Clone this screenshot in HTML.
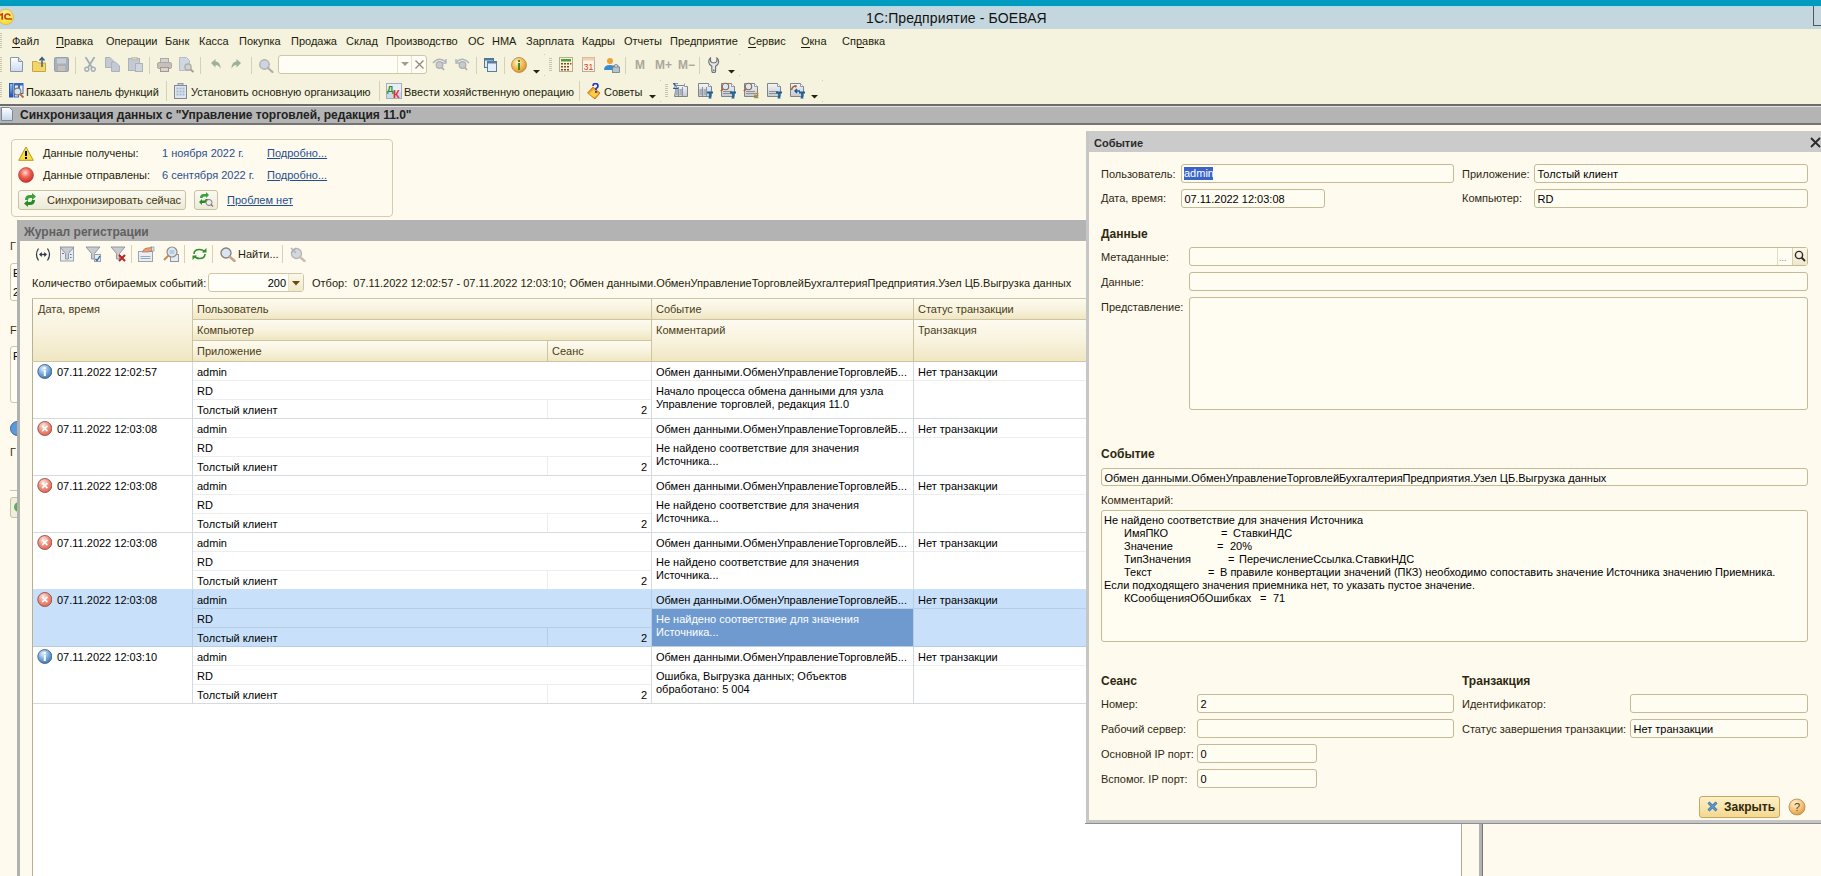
<!DOCTYPE html>
<html><head><meta charset="utf-8"><title>1C</title>
<style>
html,body{margin:0;padding:0;width:1821px;height:876px;overflow:hidden;background:#fffaee;}
.t{position:absolute;white-space:pre;font-family:'Liberation Sans', sans-serif;}
.r{position:absolute;}
</style></head><body>
<div class="r" style="left:0px;top:0px;width:1821px;height:6px;background:#029cc1"></div>
<div class="r" style="left:0px;top:6px;width:1821px;height:1px;background:#a9dcea"></div>
<div class="r" style="left:0px;top:7px;width:1821px;height:22px;background:#c5d7de"></div>
<div class="r" style="left:1813px;top:6px;width:8px;height:20px;border:1px solid #4b5a60;border-right:none;border-top:none;box-sizing:border-box"></div>
<svg class="r" style="left:0px;top:8px" width="15" height="18" viewBox="0 0 15 18"><defs><radialGradient id="lg" cx="0.45" cy="0.3" r="0.7"><stop offset="0" stop-color="#fff6a8"/><stop offset="1" stop-color="#f8d820"/></radialGradient></defs><circle cx="5.8" cy="9" r="7.7" fill="url(#lg)" stroke="#d0b860" stroke-width="0.8"/><path d="M0 7 L2.2 6 V11.7" stroke="#c8440c" stroke-width="1.7" fill="none"/><path d="M10.2 7.6 Q9.4 6 7.4 6 Q4.9 6 4.9 8.8 Q4.9 11 7.4 11 H12" stroke="#c8440c" stroke-width="1.7" fill="none"/></svg>
<div class="t" style="left:866px;top:10px;font-size:14px;line-height:16px;color:#111;font-weight:normal;letter-spacing:0.12px">1С:Предприятие - БОЕВАЯ</div>
<div class="r" style="left:0px;top:29px;width:1821px;height:75px;background:#f5f2de"></div>
<div class="r" style="left:0px;top:33px;width:2px;height:1px;background:#c9c4ad"></div>
<div class="r" style="left:0px;top:35px;width:2px;height:1px;background:#c9c4ad"></div>
<div class="r" style="left:0px;top:37px;width:2px;height:1px;background:#c9c4ad"></div>
<div class="r" style="left:0px;top:39px;width:2px;height:1px;background:#c9c4ad"></div>
<div class="r" style="left:0px;top:41px;width:2px;height:1px;background:#c9c4ad"></div>
<div class="r" style="left:0px;top:43px;width:2px;height:1px;background:#c9c4ad"></div>
<div class="r" style="left:0px;top:45px;width:2px;height:1px;background:#c9c4ad"></div>
<div class="r" style="left:0px;top:47px;width:2px;height:1px;background:#c9c4ad"></div>
<div class="r" style="left:0px;top:57px;width:2px;height:1px;background:#c9c4ad"></div>
<div class="r" style="left:0px;top:59px;width:2px;height:1px;background:#c9c4ad"></div>
<div class="r" style="left:0px;top:61px;width:2px;height:1px;background:#c9c4ad"></div>
<div class="r" style="left:0px;top:63px;width:2px;height:1px;background:#c9c4ad"></div>
<div class="r" style="left:0px;top:65px;width:2px;height:1px;background:#c9c4ad"></div>
<div class="r" style="left:0px;top:67px;width:2px;height:1px;background:#c9c4ad"></div>
<div class="r" style="left:0px;top:69px;width:2px;height:1px;background:#c9c4ad"></div>
<div class="r" style="left:0px;top:71px;width:2px;height:1px;background:#c9c4ad"></div>
<div class="r" style="left:0px;top:82px;width:2px;height:1px;background:#c9c4ad"></div>
<div class="r" style="left:0px;top:84px;width:2px;height:1px;background:#c9c4ad"></div>
<div class="r" style="left:0px;top:86px;width:2px;height:1px;background:#c9c4ad"></div>
<div class="r" style="left:0px;top:88px;width:2px;height:1px;background:#c9c4ad"></div>
<div class="r" style="left:0px;top:90px;width:2px;height:1px;background:#c9c4ad"></div>
<div class="r" style="left:0px;top:92px;width:2px;height:1px;background:#c9c4ad"></div>
<div class="r" style="left:0px;top:94px;width:2px;height:1px;background:#c9c4ad"></div>
<div class="r" style="left:0px;top:96px;width:2px;height:1px;background:#c9c4ad"></div>
<div class="t" style="left:12px;top:35px;font-size:11px;line-height:13px;color:#221d0a;font-weight:normal;">Файл</div>
<div class="t" style="left:56px;top:35px;font-size:11px;line-height:13px;color:#221d0a;font-weight:normal;">Правка</div>
<div class="t" style="left:106px;top:35px;font-size:11px;line-height:13px;color:#221d0a;font-weight:normal;">Операции</div>
<div class="t" style="left:165px;top:35px;font-size:11px;line-height:13px;color:#221d0a;font-weight:normal;">Банк</div>
<div class="t" style="left:199px;top:35px;font-size:11px;line-height:13px;color:#221d0a;font-weight:normal;">Касса</div>
<div class="t" style="left:239px;top:35px;font-size:11px;line-height:13px;color:#221d0a;font-weight:normal;">Покупка</div>
<div class="t" style="left:291px;top:35px;font-size:11px;line-height:13px;color:#221d0a;font-weight:normal;">Продажа</div>
<div class="t" style="left:346px;top:35px;font-size:11px;line-height:13px;color:#221d0a;font-weight:normal;">Склад</div>
<div class="t" style="left:386px;top:35px;font-size:11px;line-height:13px;color:#221d0a;font-weight:normal;">Производство</div>
<div class="t" style="left:468px;top:35px;font-size:11px;line-height:13px;color:#221d0a;font-weight:normal;">ОС</div>
<div class="t" style="left:492px;top:35px;font-size:11px;line-height:13px;color:#221d0a;font-weight:normal;">НМА</div>
<div class="t" style="left:526px;top:35px;font-size:11px;line-height:13px;color:#221d0a;font-weight:normal;">Зарплата</div>
<div class="t" style="left:582px;top:35px;font-size:11px;line-height:13px;color:#221d0a;font-weight:normal;">Кадры</div>
<div class="t" style="left:624px;top:35px;font-size:11px;line-height:13px;color:#221d0a;font-weight:normal;">Отчеты</div>
<div class="t" style="left:670px;top:35px;font-size:11px;line-height:13px;color:#221d0a;font-weight:normal;">Предприятие</div>
<div class="t" style="left:748px;top:35px;font-size:11px;line-height:13px;color:#221d0a;font-weight:normal;">Сервис</div>
<div class="t" style="left:801px;top:35px;font-size:11px;line-height:13px;color:#221d0a;font-weight:normal;">Окна</div>
<div class="t" style="left:842px;top:35px;font-size:11px;line-height:13px;color:#221d0a;font-weight:normal;">Справка</div>
<div class="r" style="left:12px;top:47px;width:8px;height:1px;background:#221d0a"></div>
<div class="r" style="left:56px;top:47px;width:8px;height:1px;background:#221d0a"></div>
<div class="r" style="left:748px;top:47px;width:8px;height:1px;background:#221d0a"></div>
<div class="r" style="left:801px;top:47px;width:9px;height:1px;background:#221d0a"></div>
<div class="r" style="left:857px;top:47px;width:7px;height:1px;background:#221d0a"></div>
<svg class="r" style="left:10px;top:57px" width="13" height="15" viewBox="0 0 13 15"><defs><linearGradient id="dg1057" x1="0" y1="0" x2="0" y2="1"><stop offset="0" stop-color="#ffffff"/><stop offset="1" stop-color="#c9daf0"/></linearGradient></defs><path d="M0.5 0.5 H8.5 L12.5 4.5 V14.5 H0.5 Z" fill="url(#dg1057)" stroke="#8a96a4"/><path d="M8.5 0.5 V4.5 H12.5" fill="#d6dde6" stroke="#8a96a4"/></svg>
<svg class="r" style="left:32px;top:56px" width="15" height="16" viewBox="0 0 15 16"><path d="M0.5 5.5 H5 L6.5 7 H13.5 V15.5 H0.5 Z" fill="#f3d66a" stroke="#c9a447"/><path d="M10 11 V2 M7.5 4.5 L10 1.5 L12.5 4.5" stroke="#3b5a70" stroke-width="1.4" fill="none"/></svg>
<svg class="r" style="left:54px;top:57px" width="15" height="15" viewBox="0 0 15 15"><rect x="0.5" y="0.5" width="14" height="14" rx="1" fill="#a8b0ba" stroke="#97a0aa"/><rect x="3" y="1.5" width="9" height="5" fill="#c8ced6"/><rect x="4" y="9" width="7" height="5" fill="#c8c0b8"/></svg>
<div class="r" style="left:75px;top:57px;width:1px;height:17px;background:#d5d0b8"></div>
<svg class="r" style="left:84px;top:57px" width="12" height="15" viewBox="0 0 12 15"><path d="M1.5 0 L8 10.5 M10.5 0 L4 10.5" stroke="#a4adb8" stroke-width="1.8"/><circle cx="2.8" cy="12.3" r="2" fill="none" stroke="#a4adb8" stroke-width="1.5"/><circle cx="9.2" cy="12.3" r="2" fill="none" stroke="#a4adb8" stroke-width="1.5"/></svg>
<svg class="r" style="left:105px;top:57px" width="15" height="15" viewBox="0 0 15 15"><path d="M0.5 0.5 H5 L8.5 4 V10.5 H0.5 Z" fill="#c3cad3" stroke="#aab2bc"/><path d="M6.5 5 H10.5 L14.5 9 V14.5 H6.5 Z" fill="#c3cad3" stroke="#aab2bc"/></svg>
<svg class="r" style="left:128px;top:57px" width="15" height="15" viewBox="0 0 15 15"><rect x="0.5" y="1.5" width="11" height="12" fill="#c3cad3" stroke="#aab2bc"/><rect x="4" y="0" width="5" height="3" fill="#d8d2b8" stroke="#b8b29a" stroke-width="0.6"/><rect x="7.5" y="6.5" width="7" height="8" fill="#cfd5dc" stroke="#aab2bc"/></svg>
<div class="r" style="left:149px;top:57px;width:1px;height:17px;background:#d5d0b8"></div>
<svg class="r" style="left:157px;top:58px" width="15" height="14" viewBox="0 0 15 14"><rect x="3.5" y="0.5" width="8" height="5" fill="#ccd4dc" stroke="#b0a8a0"/><rect x="0.5" y="4.5" width="14" height="6" rx="1.5" fill="#c8bfb8" stroke="#b0a8a0"/><rect x="3.5" y="9.5" width="8" height="4" fill="#d8d4d0" stroke="#a09890"/></svg>
<svg class="r" style="left:179px;top:57px" width="16" height="16" viewBox="0 0 16 16"><path d="M0.5 0.5 H7.5 L10.5 3.5 V13.5 H0.5 Z" fill="#cdd8e2" stroke="#b4bec8"/><circle cx="9" cy="10" r="3.2" fill="#c8d4dc" stroke="#b0a8a0" stroke-width="1.2"/><path d="M11.5 12.5 L14.5 15" stroke="#b09888" stroke-width="1.8"/></svg>
<div class="r" style="left:200px;top:57px;width:1px;height:17px;background:#d5d0b8"></div>
<svg class="r" style="left:211px;top:59px" width="10" height="11" viewBox="0 0 10 11"><path d="M0 4 L4.5 0 V2.5 Q9.5 2.5 9.5 10 Q8 6 4.5 6 V8.5 Z" fill="#9eb09c"/></svg>
<svg class="r" style="left:231px;top:59px" width="11" height="11" viewBox="0 0 11 11"><path d="M10 4 L5.5 0 V2.5 Q0.5 2.5 0.5 10 Q2 6 5.5 6 V8.5 Z" fill="#9eb09c"/></svg>
<div class="r" style="left:251px;top:57px;width:1px;height:17px;background:#d5d0b8"></div>
<svg class="r" style="left:259px;top:59px" width="15" height="14" viewBox="0 0 15 14"><circle cx="5.5" cy="5.5" r="4.7" fill="#cad6e2" stroke="#b6b0a8" stroke-width="1.4"/><path d="M9 9 L13.5 13" stroke="#b8a8a0" stroke-width="2.2" stroke-linecap="round"/></svg>
<div class="r" style="left:278px;top:55px;width:149px;height:19px;background:#fffdf5;border:1px solid #cfc6a4;border-radius:3px;box-sizing:border-box"></div>
<div class="r" style="left:397px;top:56px;width:1px;height:17px;background:#e6e0c8"></div>
<svg class="r" style="left:401px;top:62px" width="8" height="5" viewBox="0 0 8 5"><path d="M0 0 H8 L4 4 Z" fill="#a49c84"/></svg>
<div class="r" style="left:411px;top:56px;width:1px;height:17px;background:#e6e0c8"></div>
<svg class="r" style="left:415px;top:60px" width="9" height="9" viewBox="0 0 9 9"><path d="M0.5 0.5 L8.5 8.5 M8.5 0.5 L0.5 8.5" stroke="#8f8a7a" stroke-width="1.3"/></svg>
<svg class="r" style="left:432px;top:58px" width="15" height="13" viewBox="0 0 15 13"><path d="M1 5 Q7 -2 14 4" stroke="#a8b6c0" stroke-width="1.6" fill="none"/><path d="M14 1 V5 H10.5" stroke="#a8b6c0" stroke-width="1.4" fill="none"/><circle cx="7.5" cy="7" r="3.3" fill="#c3ccd6" stroke="#b6aca4" stroke-width="1.2"/><path d="M9.8 9.5 L12 12" stroke="#b6aca4" stroke-width="1.8"/></svg>
<svg class="r" style="left:455px;top:58px" width="15" height="13" viewBox="0 0 15 13"><path d="M1 4 Q8 -2 14 5" stroke="#a8b6c0" stroke-width="1.6" fill="none"/><path d="M1 1 V5 H4.5" stroke="#a8b6c0" stroke-width="1.4" fill="none"/><circle cx="7.5" cy="7" r="3.3" fill="#c3ccd6" stroke="#b6aca4" stroke-width="1.2"/><path d="M9.8 9.5 L12 12" stroke="#b6aca4" stroke-width="1.8"/></svg>
<div class="r" style="left:476px;top:57px;width:1px;height:17px;background:#d5d0b8"></div>
<svg class="r" style="left:484px;top:58px" width="14" height="15" viewBox="0 0 14 15"><rect x="0.5" y="0.5" width="9" height="9" fill="#dce8f4" stroke="#4e7898"/><rect x="0.5" y="0.5" width="9" height="2" fill="#4e7898"/><rect x="3.5" y="3.5" width="9" height="10" fill="#e4eef8" stroke="#5a7e9c"/><rect x="3.5" y="3.5" width="9" height="2" fill="#5a7e9c"/></svg>
<div class="r" style="left:504px;top:57px;width:1px;height:17px;background:#d5d0b8"></div>
<svg class="r" style="left:511px;top:57px" width="16" height="16" viewBox="0 0 16 16"><defs><radialGradient id="ig" cx="0.4" cy="0.35" r="0.7"><stop offset="0" stop-color="#fff2c8"/><stop offset="0.6" stop-color="#f0b450"/><stop offset="1" stop-color="#d89030"/></radialGradient></defs><circle cx="8" cy="8" r="7.5" fill="url(#ig)" stroke="#b88838" stroke-width="0.8"/><rect x="7" y="6" width="2" height="7" fill="#4a8a1a"/><rect x="7" y="3" width="2" height="2" fill="#4a8a1a"/></svg>
<svg class="r" style="left:533px;top:70px" width="7" height="4" viewBox="0 0 7 4"><path d="M0 0 H7 L3.5 3.5 Z" fill="#2a2208"/></svg>
<div class="r" style="left:544px;top:54px;width:1px;height:1px;background:#d0cab0"></div>
<div class="r" style="left:544px;top:75px;width:1px;height:1px;background:#d0cab0"></div>
<div class="r" style="left:549px;top:58px;width:3px;height:1px;background:#c9c4ad"></div>
<div class="r" style="left:549px;top:60px;width:3px;height:1px;background:#c9c4ad"></div>
<div class="r" style="left:549px;top:62px;width:3px;height:1px;background:#c9c4ad"></div>
<div class="r" style="left:549px;top:64px;width:3px;height:1px;background:#c9c4ad"></div>
<div class="r" style="left:549px;top:66px;width:3px;height:1px;background:#c9c4ad"></div>
<div class="r" style="left:549px;top:68px;width:3px;height:1px;background:#c9c4ad"></div>
<div class="r" style="left:549px;top:70px;width:3px;height:1px;background:#c9c4ad"></div>
<svg class="r" style="left:559px;top:57px" width="14" height="15" viewBox="0 0 14 15"><rect x="0.5" y="0.5" width="13" height="14" fill="#fbf3dc" stroke="#b8ae8c"/><rect x="2" y="2" width="10" height="2.5" fill="#4aa03a"/><g fill="#7a4a2a"><rect x="2" y="6" width="2" height="1.5"/><rect x="5" y="6" width="2" height="1.5"/><rect x="8" y="6" width="2" height="1.5"/><rect x="2" y="9" width="2" height="1.5"/><rect x="5" y="9" width="2" height="1.5"/><rect x="8" y="9" width="2" height="1.5"/><rect x="2" y="12" width="2" height="1.5"/><rect x="5" y="12" width="2" height="1.5"/><rect x="8" y="12" width="2" height="1.5"/></g><rect x="11" y="6" width="1.5" height="1.5" fill="#d03020"/></svg>
<svg class="r" style="left:582px;top:57px" width="13" height="15" viewBox="0 0 13 15"><rect x="0.5" y="0.5" width="12" height="14" fill="#fbf3e4" stroke="#b8ae9a"/><rect x="0.5" y="0.5" width="12" height="3" fill="#f0d0b0"/><text x="6.5" y="12.5" font-family="Liberation Sans" font-size="8.5" text-anchor="middle" fill="#d84020">31</text></svg>
<svg class="r" style="left:604px;top:57px" width="16" height="16" viewBox="0 0 16 16"><circle cx="6" cy="4" r="3" fill="#f0a030"/><path d="M0 13 Q0 8 6 8 Q10 8 11 10 V13 Z" fill="#3a8ad0"/><rect x="8.5" y="10" width="7" height="5.5" fill="#b8c4d0" stroke="#6a7a8a" stroke-width="0.8"/><path d="M10 10 V8.5 Q12 6.5 14 8.5 V10" stroke="#6a7a8a" fill="none"/></svg>
<div class="r" style="left:625px;top:57px;width:1px;height:17px;background:#d5d0b8"></div>
<div class="t" style="left:635px;top:58px;font-size:12px;line-height:14px;color:#aca79b;font-weight:bold;">M</div>
<div class="t" style="left:655px;top:58px;font-size:12px;line-height:14px;color:#aca79b;font-weight:bold;">M+</div>
<div class="t" style="left:678px;top:58px;font-size:12px;line-height:14px;color:#aca79b;font-weight:bold;">M−</div>
<div class="r" style="left:699px;top:57px;width:1px;height:17px;background:#d5d0b8"></div>
<svg class="r" style="left:708px;top:57px" width="12" height="16" viewBox="0 0 12 16"><path d="M2.5 0.8 A5 5 0 0 0 3.8 9.2 V13.8 A1.9 1.9 0 0 0 7.6 13.8 V9.2 A5 5 0 0 0 8.9 0.8 V4.2 L7.2 5.8 H4.2 L2.5 4.2 Z" fill="#e2e6ea" stroke="#6a7078" stroke-width="1.1"/><circle cx="5.7" cy="13.3" r="0.9" fill="#6a7078"/></svg>
<svg class="r" style="left:728px;top:70px" width="7" height="4" viewBox="0 0 7 4"><path d="M0 0 H7 L3.5 3.5 Z" fill="#2a2208"/></svg>
<div class="r" style="left:739px;top:54px;width:1px;height:1px;background:#d0cab0"></div>
<div class="r" style="left:739px;top:75px;width:1px;height:1px;background:#d0cab0"></div>
<svg class="r" style="left:9px;top:83px" width="16" height="16" viewBox="0 0 16 16"><defs><linearGradient id="pc" x1="0" y1="0" x2="0" y2="1"><stop offset="0" stop-color="#9cc4f4"/><stop offset="0.6" stop-color="#4a84d8"/><stop offset="1" stop-color="#1a48a8"/></linearGradient></defs><rect x="0.5" y="0.5" width="3.5" height="13.5" fill="url(#pc)" stroke="#2a5ab8"/><rect x="5.5" y="0.5" width="4" height="13.5" fill="#e8f0fa" stroke="#3a6ac0"/><rect x="5.5" y="0.5" width="4" height="2" fill="#3a6ac0"/><rect x="10.5" y="0.5" width="3.5" height="10" fill="#e8f0fa" stroke="#3a6ac0"/><rect x="10.5" y="0.5" width="3.5" height="2" fill="#3a6ac0"/><circle cx="8.5" cy="8.5" r="3.4" fill="#d4e6f8" stroke="#8a7a60" stroke-width="1.1"/><path d="M11 11 L14.5 14.5" stroke="#b87038" stroke-width="2"/></svg>
<div class="t" style="left:26px;top:86px;font-size:11px;line-height:13px;color:#221d0a;font-weight:normal;">Показать панель функций</div>
<div class="r" style="left:166px;top:81px;width:1px;height:20px;background:#d5d0b8"></div>
<svg class="r" style="left:174px;top:83px" width="13" height="16" viewBox="0 0 13 16"><rect x="4" y="0.5" width="5" height="2.5" fill="#c8d0dc" stroke="#7a8898" stroke-width="0.8"/><rect x="0.5" y="2.5" width="12" height="13" fill="#dfe6f0" stroke="#7a8898"/><g fill="#a8b8cc"><rect x="2.5" y="4.5" width="2" height="2"/><rect x="5.5" y="4.5" width="2" height="2"/><rect x="8.5" y="4.5" width="2" height="2"/><rect x="2.5" y="7.5" width="2" height="2"/><rect x="5.5" y="7.5" width="2" height="2"/><rect x="8.5" y="7.5" width="2" height="2"/><rect x="2.5" y="10.5" width="2" height="2"/><rect x="5.5" y="10.5" width="2" height="2"/><rect x="8.5" y="10.5" width="2" height="2"/></g></svg>
<div class="t" style="left:191px;top:86px;font-size:11px;line-height:13px;color:#221d0a;font-weight:normal;">Установить основную организацию</div>
<div class="r" style="left:379px;top:81px;width:1px;height:20px;background:#d5d0b8"></div>
<svg class="r" style="left:386px;top:83px" width="17" height="17" viewBox="0 0 17 17"><rect x="0.5" y="0.5" width="15" height="15" fill="#e8eef4" stroke="#a4b0bc"/><rect x="1" y="9" width="14" height="6" fill="#c8daea"/><text x="1" y="9" font-family="Liberation Sans" font-weight="bold" font-size="9" fill="#2a8a2a">Д</text><text x="7" y="15" font-family="Liberation Sans" font-weight="bold" font-size="11" fill="#e03030">К</text></svg>
<div class="t" style="left:404px;top:86px;font-size:11px;line-height:13px;color:#221d0a;font-weight:normal;">Ввести хозяйственную операцию</div>
<div class="r" style="left:579px;top:81px;width:1px;height:20px;background:#d5d0b8"></div>
<svg class="r" style="left:587px;top:83px" width="14" height="17" viewBox="0 0 14 17"><path d="M0.5 10 L6 4 L13 10 L8 16 Z" fill="#f0a020" stroke="#c06818" stroke-width="0.8"/><path d="M2 11 L6.5 6.5 L11 11 L7.5 14.5 Z" fill="#f8d040"/><path d="M6 3 Q6 0.5 8.5 0.5 Q11 0.5 11 3 Q11 5 9 5.5 V7" stroke="#2030c0" stroke-width="1.6" fill="none"/><rect x="8" y="8" width="1.8" height="1.8" fill="#2030c0"/></svg>
<div class="t" style="left:604px;top:86px;font-size:11px;line-height:13px;color:#221d0a;font-weight:normal;">Советы</div>
<svg class="r" style="left:649px;top:95px" width="7" height="4" viewBox="0 0 7 4"><path d="M0 0 H7 L3.5 3.5 Z" fill="#2a2208"/></svg>
<div class="r" style="left:660px;top:80px;width:1px;height:1px;background:#d0cab0"></div>
<div class="r" style="left:660px;top:101px;width:1px;height:1px;background:#d0cab0"></div>
<div class="r" style="left:665px;top:84px;width:3px;height:1px;background:#c9c4ad"></div>
<div class="r" style="left:665px;top:86px;width:3px;height:1px;background:#c9c4ad"></div>
<div class="r" style="left:665px;top:88px;width:3px;height:1px;background:#c9c4ad"></div>
<div class="r" style="left:665px;top:90px;width:3px;height:1px;background:#c9c4ad"></div>
<div class="r" style="left:665px;top:92px;width:3px;height:1px;background:#c9c4ad"></div>
<div class="r" style="left:665px;top:94px;width:3px;height:1px;background:#c9c4ad"></div>
<div class="r" style="left:665px;top:96px;width:3px;height:1px;background:#c9c4ad"></div>
<svg class="r" style="left:673px;top:82px" width="17" height="17" viewBox="0 0 17 17"><defs><linearGradient id="pg673" x1="0" y1="0" x2="0" y2="1"><stop offset="0" stop-color="#f4f6f8"/><stop offset="1" stop-color="#c4c8cc"/></linearGradient></defs><path d="M3.5 3.5 H11.5 L14.5 4.5 V14.5 H1.5 Z" fill="url(#pg673)" stroke="#7c848c"/><path d="M11.5 1.5 V4.5 H14.5" fill="#fff" stroke="#7c848c" stroke-width="0.8"/><g stroke="#8a96a8"><path d="M5.5 5 V14 M9.5 5 V14"/></g><g fill="#a8b0b8"><rect x="2.5" y="7" width="2.5" height="6"/><rect x="6.5" y="7" width="2.5" height="6"/></g><text x="-0.5" y="7" font-family="Liberation Serif" font-weight="bold" font-size="9" fill="#1a5a98">Σ</text></svg>
<svg class="r" style="left:697px;top:82px" width="17" height="17" viewBox="0 0 17 17"><defs><linearGradient id="pg697" x1="0" y1="0" x2="0" y2="1"><stop offset="0" stop-color="#f4f6f8"/><stop offset="1" stop-color="#c4c8cc"/></linearGradient></defs><path d="M1.5 1.5 H11.5 L14.5 4.5 V14.5 H1.5 Z" fill="url(#pg697)" stroke="#7c848c"/><path d="M11.5 1.5 V4.5 H14.5" fill="#fff" stroke="#7c848c" stroke-width="0.8"/><g stroke="#8a96a8"><path d="M5.5 5 V14 M9.5 5 V14"/></g><g fill="#a8b0b8"><rect x="2.5" y="7" width="2.5" height="6"/><rect x="6.5" y="7" width="2.5" height="6"/></g><path d="M10 10.5 H16 M13 10.5 V16" stroke="#1a6098" stroke-width="1.8"/><path d="M11.5 16 H14.5" stroke="#1a6098" stroke-width="1"/></svg>
<svg class="r" style="left:720px;top:82px" width="17" height="17" viewBox="0 0 17 17"><defs><linearGradient id="pg720" x1="0" y1="0" x2="0" y2="1"><stop offset="0" stop-color="#f4f6f8"/><stop offset="1" stop-color="#c4c8cc"/></linearGradient></defs><path d="M1.5 1.5 H11.5 L14.5 4.5 V14.5 H1.5 Z" fill="url(#pg720)" stroke="#7c848c"/><path d="M11.5 1.5 V4.5 H14.5" fill="#fff" stroke="#7c848c" stroke-width="0.8"/><g stroke="#8a9098" stroke-width="1.2"><path d="M3 9.5 H12 M3 11.5 H12"/></g><path d="M10 10.5 H16 M13 10.5 V16" stroke="#1a6098" stroke-width="1.8"/><path d="M11.5 16 H14.5" stroke="#1a6098" stroke-width="1"/><circle cx="5.5" cy="4.5" r="3.2" fill="#d8e8f8" stroke="#8a6a4a" stroke-width="1.1"/><path d="M3.2 6.8 L0.8 9.2" stroke="#a86030" stroke-width="1.5"/></svg>
<svg class="r" style="left:743px;top:82px" width="17" height="17" viewBox="0 0 17 17"><defs><linearGradient id="pg743" x1="0" y1="0" x2="0" y2="1"><stop offset="0" stop-color="#f4f6f8"/><stop offset="1" stop-color="#c4c8cc"/></linearGradient></defs><path d="M1.5 1.5 H11.5 L14.5 4.5 V14.5 H1.5 Z" fill="url(#pg743)" stroke="#7c848c"/><path d="M11.5 1.5 V4.5 H14.5" fill="#fff" stroke="#7c848c" stroke-width="0.8"/><g stroke="#8a9098" stroke-width="1.2"><path d="M3 9.5 H12 M3 11.5 H12"/></g><circle cx="5.5" cy="4.5" r="3.2" fill="#d8e8f8" stroke="#8a6a4a" stroke-width="1.1"/><path d="M3.2 6.8 L0.8 9.2" stroke="#a86030" stroke-width="1.5"/><g fill="#b09040"><rect x="11" y="11" width="4.5" height="1.2"/><rect x="11" y="13" width="4.5" height="1.2"/><rect x="11" y="15" width="4.5" height="1.2"/></g></svg>
<svg class="r" style="left:766px;top:82px" width="17" height="17" viewBox="0 0 17 17"><defs><linearGradient id="pg766" x1="0" y1="0" x2="0" y2="1"><stop offset="0" stop-color="#f4f6f8"/><stop offset="1" stop-color="#c4c8cc"/></linearGradient></defs><path d="M1.5 1.5 H11.5 L14.5 4.5 V14.5 H1.5 Z" fill="url(#pg766)" stroke="#7c848c"/><path d="M11.5 1.5 V4.5 H14.5" fill="#fff" stroke="#7c848c" stroke-width="0.8"/><g stroke="#8a9098" stroke-width="1.2"><path d="M3 9.5 H12 M3 11.5 H12"/></g><path d="M10 10.5 H16 M13 10.5 V16" stroke="#1a6098" stroke-width="1.8"/><path d="M11.5 16 H14.5" stroke="#1a6098" stroke-width="1"/></svg>
<svg class="r" style="left:789px;top:82px" width="17" height="17" viewBox="0 0 17 17"><defs><linearGradient id="pg789" x1="0" y1="0" x2="0" y2="1"><stop offset="0" stop-color="#f4f6f8"/><stop offset="1" stop-color="#c4c8cc"/></linearGradient></defs><path d="M1.5 1.5 H11.5 L14.5 4.5 V14.5 H1.5 Z" fill="url(#pg789)" stroke="#7c848c"/><path d="M11.5 1.5 V4.5 H14.5" fill="#fff" stroke="#7c848c" stroke-width="0.8"/><path d="M10 10.5 H16 M13 10.5 V16" stroke="#1a6098" stroke-width="1.8"/><path d="M11.5 16 H14.5" stroke="#1a6098" stroke-width="1"/><path d="M2.5 8 Q3.5 3.5 7.5 4" stroke="#b05a20" stroke-width="1.4" fill="none"/><path d="M6 3 L8 4 L6.5 6" fill="#b05a20"/><path d="M11 9 H6 M8 7 L6 9 L8 11" stroke="#1a5a98" stroke-width="1.4" fill="none"/></svg>
<svg class="r" style="left:811px;top:95px" width="7" height="4" viewBox="0 0 7 4"><path d="M0 0 H7 L3.5 3.5 Z" fill="#2a2208"/></svg>
<div class="r" style="left:822px;top:80px;width:1px;height:1px;background:#d0cab0"></div>
<div class="r" style="left:822px;top:101px;width:1px;height:1px;background:#d0cab0"></div>
<div class="r" style="left:0px;top:104px;width:1821px;height:2px;background:#6c6c6c"></div>
<div class="r" style="left:0px;top:106px;width:1821px;height:1px;background:#e4e4e4"></div>
<div class="r" style="left:0px;top:107px;width:1821px;height:16px;background:#b4b4b4"></div>
<div class="r" style="left:0px;top:123px;width:1821px;height:2px;background:#747474"></div>
<svg class="r" style="left:1px;top:107px" width="13" height="15" viewBox="0 0 13 15"><defs><linearGradient id="tdg" x1="0" y1="0" x2="0" y2="1"><stop offset="0" stop-color="#ffffff"/><stop offset="1" stop-color="#c4d6e8"/></linearGradient></defs><path d="M0.5 0.5 H8.5 L11.5 3.5 V13.5 H0.5 Z" fill="url(#tdg)" stroke="#7a8898"/></svg>
<div class="t" style="left:20px;top:108px;font-size:12px;line-height:14px;color:#222;font-weight:bold;">Синхронизация данных с &quot;Управление торговлей, редакция 11.0&quot;</div>
<div class="r" style="left:0px;top:125px;width:1821px;height:751px;background:#fffaee"></div>
<div class="t" style="left:10px;top:240px;font-size:11px;line-height:13px;color:#3a3010;font-weight:normal;width:7px;overflow:hidden">Г</div>
<div class="r" style="left:10px;top:263px;width:12px;height:38px;border:1px solid #cfc6a4;border-radius:3px;box-sizing:border-box;background:#fffdf6"></div>
<div class="t" style="left:13px;top:267px;font-size:11px;line-height:13px;color:#000;font-weight:normal;width:4px;overflow:hidden">Е</div>
<div class="t" style="left:13px;top:286px;font-size:11px;line-height:13px;color:#000;font-weight:normal;width:4px;overflow:hidden">2</div>
<div class="t" style="left:10px;top:324px;font-size:11px;line-height:13px;color:#3a3010;font-weight:normal;width:7px;overflow:hidden">F</div>
<div class="r" style="left:10px;top:346px;width:12px;height:57px;border:1px solid #cfc6a4;border-radius:3px;box-sizing:border-box;background:#fffdf6"></div>
<div class="t" style="left:13px;top:350px;font-size:11px;line-height:13px;color:#000;font-weight:normal;width:4px;overflow:hidden">Р</div>
<svg class="r" style="left:10px;top:421px" width="8" height="15" viewBox="0 0 8 15"><circle cx="7.5" cy="7.5" r="7" fill="#5a9ad8" stroke="#3a6a9a"/></svg>
<div class="t" style="left:10px;top:446px;font-size:11px;line-height:13px;color:#3a3010;font-weight:normal;width:7px;overflow:hidden">Г</div>
<div class="r" style="left:10px;top:490px;width:8px;height:1px;background:#cfc6a4"></div>
<div class="r" style="left:10px;top:497px;width:12px;height:21px;border:1px solid #c8c0a0;border-radius:3px;box-sizing:border-box;background:#f0eee0"></div>
<svg class="r" style="left:13px;top:501px" width="5" height="12" viewBox="0 0 5 12"><circle cx="6" cy="6" r="5" fill="#5ab050"/></svg>
<div class="r" style="left:11px;top:139px;width:382px;height:78px;border:1px solid #d6cdb0;border-radius:4px;box-sizing:border-box"></div>
<svg class="r" style="left:18px;top:146px" width="16" height="15" viewBox="0 0 16 15"><path d="M8 1 L15.3 14.3 H0.7 Z" fill="#f8e040" stroke="#b89820" stroke-width="1" stroke-linejoin="round"/><rect x="7" y="5" width="2" height="5" fill="#000"/><rect x="7" y="11" width="2" height="2" fill="#000"/></svg>
<svg class="r" style="left:18px;top:167px" width="16" height="16" viewBox="0 0 16 16"><defs><radialGradient id="rg" cx="0.45" cy="0.35" r="0.65"><stop offset="0" stop-color="#ffd8d0"/><stop offset="0.5" stop-color="#f06050"/><stop offset="1" stop-color="#c83028"/></radialGradient></defs><circle cx="8" cy="8" r="7.5" fill="url(#rg)" stroke="#a04038" stroke-width="0.6"/></svg>
<div class="t" style="left:43px;top:147px;font-size:11px;line-height:13px;color:#221d0a;font-weight:normal;">Данные получены:</div>
<div class="t" style="left:162px;top:147px;font-size:11px;line-height:13px;color:#1f4f8f;font-weight:normal;">1 ноября 2022 г.</div>
<div class="t" style="left:267px;top:147px;font-size:11px;line-height:13px;color:#1f4f8f;font-weight:normal;text-decoration:underline">Подробно...</div>
<div class="t" style="left:43px;top:169px;font-size:11px;line-height:13px;color:#221d0a;font-weight:normal;">Данные отправлены:</div>
<div class="t" style="left:162px;top:169px;font-size:11px;line-height:13px;color:#1f4f8f;font-weight:normal;">6 сентября 2022 г.</div>
<div class="t" style="left:267px;top:169px;font-size:11px;line-height:13px;color:#1f4f8f;font-weight:normal;text-decoration:underline">Подробно...</div>
<div class="r" style="left:18px;top:190px;width:168px;height:20px;border:1px solid #c9c1a0;border-radius:3px;box-sizing:border-box;background:linear-gradient(#fbfaf2,#ecead8)"></div>
<svg class="r" style="left:23px;top:193px" width="14" height="14" viewBox="0 0 14 14"><path d="M2 7 Q2 2 7 2 H9 V0 L13 3.5 L9 7 V5 H7 Q5 5 5 7 Z" fill="#3aa03a"/><path d="M12 7 Q12 12 7 12 H5 V14 L1 10.5 L5 7 V9 H7 Q9 9 9 7 Z" fill="#2a8a2a"/></svg>
<div class="t" style="left:47px;top:194px;font-size:11px;line-height:13px;color:#43360c;font-weight:normal;">Синхронизировать сейчас</div>
<div class="r" style="left:194px;top:190px;width:24px;height:20px;border:1px solid #c9c1a0;border-radius:3px;box-sizing:border-box;background:linear-gradient(#fbfaf2,#ecead8)"></div>
<svg class="r" style="left:198px;top:192px" width="16" height="16" viewBox="0 0 16 16"><path d="M2 6 Q2 2 6 2 H8 V0 L11 3 L8 6 V4.5 H6 Q4.5 4.5 4.5 6 Z" fill="#3aa03a"/><path d="M10 7 Q10 11 6 11 H4 V13 L1 10 L4 7 V8.5 H6 Q7.5 8.5 7.5 7 Z" fill="#2a8a2a"/><circle cx="11" cy="10.5" r="3" fill="#e8eef6" stroke="#8a7a6a" stroke-width="1"/><path d="M13 12.5 L15 14.5" stroke="#8a7a6a" stroke-width="1.5"/></svg>
<div class="t" style="left:227px;top:194px;font-size:11px;line-height:13px;color:#1f4f8f;font-weight:normal;text-decoration:underline">Проблем нет</div>
<div class="r" style="left:17px;top:220px;width:1466px;height:656px;background:#fffaee"></div>
<div class="r" style="left:17px;top:220px;width:3px;height:656px;background:#b1b1b1"></div>
<div class="r" style="left:1479px;top:220px;width:3px;height:656px;background:#b2b2b2"></div>
<div class="r" style="left:1482px;top:220px;width:1px;height:656px;background:#767676"></div>
<div class="r" style="left:20px;top:220px;width:1459px;height:21px;background:#b3b3b3"></div>
<div class="t" style="left:24px;top:225px;font-size:12px;line-height:14px;color:#606060;font-weight:bold;">Журнал регистрации</div>
<svg class="r" style="left:35px;top:248px" width="16" height="13" viewBox="0 0 16 13"><path d="M3.5 0.5 Q-0.5 6.5 3.5 12.5 M12.5 0.5 Q16.5 6.5 12.5 12.5" stroke="#2a3a4a" stroke-width="1.2" fill="none"/><path d="M5 6.5 H11" stroke="#2a3a4a" stroke-width="1.3"/><path d="M4 6.5 L6.8 4 V9 Z M12 6.5 L9.2 4 V9 Z" fill="#2a3a4a"/></svg>
<svg class="r" style="left:59px;top:246px" width="16" height="16" viewBox="0 0 16 16"><rect x="1.5" y="1.5" width="13" height="13.5" fill="#e4ecf4" stroke="#98a2ac"/><path d="M1 1 H15 L9.5 7.5 V13 H6.5 V7.5 Z" fill="#c8ccd0" stroke="#8a9098" stroke-width="0.9"/><g fill="#d05050"><rect x="3" y="7" width="2" height="1"/></g><g fill="#5070a0"><rect x="11" y="8" width="1.5" height="1"/><rect x="11" y="11" width="1.5" height="1"/></g></svg>
<svg class="r" style="left:85px;top:246px" width="16" height="16" viewBox="0 0 16 16"><path d="M1 1 H15 L9.5 7.5 V13 H6.5 V7.5 Z" fill="#c8ccd0" stroke="#8a9098" stroke-width="0.9"/><rect x="9.5" y="8.5" width="6" height="7" fill="#e4ecf4" stroke="#98a2ac"/><path d="M10.5 13 L12 14.5 L15 10" stroke="#2a62a0" stroke-width="1.3" fill="none"/></svg>
<svg class="r" style="left:110px;top:246px" width="16" height="16" viewBox="0 0 16 16"><path d="M1 1 H15 L9.5 7.5 V13 H6.5 V7.5 Z" fill="#c8ccd0" stroke="#8a9098" stroke-width="0.9"/><path d="M9 9 L15 15 M15 9 L9 15" stroke="#c02020" stroke-width="2"/></svg>
<div class="r" style="left:131px;top:245px;width:1px;height:18px;background:#d5d0b8"></div>
<svg class="r" style="left:138px;top:246px" width="17" height="16" viewBox="0 0 17 16"><rect x="0.5" y="5.5" width="14" height="10" fill="#e8eef4" stroke="#9aa4ae"/><g stroke="#9aa8b8"><path d="M2.5 10.5 H12.5 M2.5 12.5 H12.5"/></g><path d="M4 6 Q7 1 10 2 L14 1 V5 L10 6 Z" fill="#e8a070" stroke="#b07050" stroke-width="0.7"/><rect x="13.5" y="1" width="2.5" height="4" fill="#d8e4f0" stroke="#7a8a9a" stroke-width="0.6"/></svg>
<svg class="r" style="left:163px;top:246px" width="16" height="16" viewBox="0 0 16 16"><rect x="7.5" y="8.5" width="8" height="7" fill="#e4ecf4" stroke="#8a96a4"/><circle cx="9" cy="6" r="5" fill="#dde8f4" stroke="#9a8a7a" stroke-width="1.2"/><path d="M5.5 9.5 L1 14" stroke="#c88858" stroke-width="2"/><g stroke="#8ab0d8"><path d="M6.5 5 H11.5 M6.5 7 H11.5"/></g></svg>
<div class="r" style="left:184px;top:245px;width:1px;height:18px;background:#d5d0b8"></div>
<svg class="r" style="left:192px;top:248px" width="15" height="12" viewBox="0 0 15 12"><path d="M2 6 Q2 1.5 7.5 1.5 Q11 1.5 12.5 4" stroke="#2f8f2f" stroke-width="1.6" fill="none"/><path d="M10 4.5 H14.5 L14.5 0 Z" fill="#2f8f2f"/><path d="M13 6 Q13 10.5 7.5 10.5 Q4 10.5 2.5 8" stroke="#2f8f2f" stroke-width="1.6" fill="none"/><path d="M5 7.5 H0.5 V12 Z" fill="#2f8f2f"/></svg>
<div class="r" style="left:212px;top:245px;width:1px;height:18px;background:#d5d0b8"></div>
<svg class="r" style="left:220px;top:247px" width="16" height="15" viewBox="0 0 16 15"><circle cx="6" cy="6" r="5" fill="#d8e6f4" stroke="#8a7e76" stroke-width="1.3"/><path d="M9.5 9.5 L14.5 14" stroke="#c8a088" stroke-width="2.4" stroke-linecap="round"/></svg>
<div class="t" style="left:238px;top:248px;font-size:11px;line-height:13px;color:#221d0a;font-weight:normal;">Найти...</div>
<div class="r" style="left:282px;top:245px;width:1px;height:18px;background:#d5d0b8"></div>
<svg class="r" style="left:290px;top:247px" width="16" height="15" viewBox="0 0 16 15"><circle cx="6.5" cy="6.5" r="5" fill="#d0d8e0" stroke="#b8b4b0" stroke-width="1.3"/><path d="M10 10 L14.5 14" stroke="#c8bcb4" stroke-width="2.4" stroke-linecap="round"/><path d="M1 1 L6 6 M6 1 L1 6" stroke="#b8b0b0" stroke-width="1.5"/></svg>
<div class="t" style="left:32px;top:277px;font-size:11px;line-height:13px;color:#221d0a;font-weight:normal;">Количество отбираемых событий:</div>
<div class="r" style="left:208px;top:273px;width:96px;height:19px;background:#fffef8;border:1px solid #cfc6a4;border-radius:3px;box-sizing:border-box"></div>
<div class="r" style="left:288px;top:274px;width:1px;height:17px;background:#e8e2cc"></div>
<div class="r" style="left:289px;top:274px;width:14px;height:17px;background:linear-gradient(#fbf8ea,#efe8cc)"></div>
<svg class="r" style="left:292px;top:281px" width="8" height="5" viewBox="0 0 8 5"><path d="M0 0 H8 L4 4.5 Z" fill="#6a4a10"/></svg>
<div class="t" style="left:266px;top:277px;font-size:11px;line-height:13px;color:#000;font-weight:normal;width:20px;text-align:right">200</div>
<div class="t" style="left:312px;top:277px;font-size:11px;line-height:13px;color:#221d0a;font-weight:normal;">Отбор:  07.11.2022 12:02:57 - 07.11.2022 12:03:10; Обмен данными.ОбменУправлениеТорговлейБухгалтерияПредприятия.Узел ЦБ.Выгрузка данных</div>
<div class="r" style="left:32px;top:298px;width:1430px;height:578px;background:#fff"></div>
<div class="r" style="left:32px;top:298px;width:1px;height:578px;background:#b8b094"></div>
<div class="r" style="left:1461px;top:298px;width:1px;height:578px;background:#b4ac92"></div>
<div class="r" style="left:33px;top:299px;width:159px;height:62px;background:linear-gradient(#fdfbf1,#f8f2dc 55%,#efe6c2)"></div>
<div class="r" style="left:193px;top:299px;width:458px;height:20px;background:linear-gradient(#fdfbf1,#f8f2dc 55%,#efe6c2)"></div>
<div class="r" style="left:193px;top:320px;width:458px;height:20px;background:linear-gradient(#fdfbf1,#f8f2dc 55%,#efe6c2)"></div>
<div class="r" style="left:193px;top:341px;width:354px;height:20px;background:linear-gradient(#fdfbf1,#f8f2dc 55%,#efe6c2)"></div>
<div class="r" style="left:548px;top:341px;width:103px;height:20px;background:linear-gradient(#fdfbf1,#f8f2dc 55%,#efe6c2)"></div>
<div class="r" style="left:652px;top:299px;width:261px;height:20px;background:linear-gradient(#fdfbf1,#f8f2dc 55%,#efe6c2)"></div>
<div class="r" style="left:652px;top:320px;width:261px;height:41px;background:linear-gradient(#fdfbf1,#f8f2dc 55%,#efe6c2)"></div>
<div class="r" style="left:914px;top:299px;width:547px;height:20px;background:linear-gradient(#fdfbf1,#f8f2dc 55%,#efe6c2)"></div>
<div class="r" style="left:914px;top:320px;width:547px;height:41px;background:linear-gradient(#fdfbf1,#f8f2dc 55%,#efe6c2)"></div>
<div class="r" style="left:32px;top:298px;width:1430px;height:1px;background:#cfc4a0"></div>
<div class="r" style="left:32px;top:361px;width:1430px;height:1px;background:#cfc4a0"></div>
<div class="r" style="left:192px;top:319px;width:1270px;height:1px;background:#cfc4a0"></div>
<div class="r" style="left:192px;top:340px;width:459px;height:1px;background:#cfc4a0"></div>
<div class="r" style="left:192px;top:299px;width:1px;height:62px;background:#cfc4a0"></div>
<div class="r" style="left:547px;top:341px;width:1px;height:20px;background:#cfc4a0"></div>
<div class="r" style="left:651px;top:299px;width:1px;height:62px;background:#cfc4a0"></div>
<div class="r" style="left:913px;top:299px;width:1px;height:62px;background:#cfc4a0"></div>
<div class="t" style="left:38px;top:303px;font-size:11px;line-height:13px;color:#4a3d16;font-weight:normal;">Дата, время</div>
<div class="t" style="left:197px;top:303px;font-size:11px;line-height:13px;color:#4a3d16;font-weight:normal;">Пользователь</div>
<div class="t" style="left:197px;top:324px;font-size:11px;line-height:13px;color:#4a3d16;font-weight:normal;">Компьютер</div>
<div class="t" style="left:197px;top:345px;font-size:11px;line-height:13px;color:#4a3d16;font-weight:normal;">Приложение</div>
<div class="t" style="left:552px;top:345px;font-size:11px;line-height:13px;color:#4a3d16;font-weight:normal;">Сеанс</div>
<div class="t" style="left:656px;top:303px;font-size:11px;line-height:13px;color:#4a3d16;font-weight:normal;">Событие</div>
<div class="t" style="left:656px;top:324px;font-size:11px;line-height:13px;color:#4a3d16;font-weight:normal;">Комментарий</div>
<div class="t" style="left:918px;top:303px;font-size:11px;line-height:13px;color:#4a3d16;font-weight:normal;">Статус транзакции</div>
<div class="t" style="left:918px;top:324px;font-size:11px;line-height:13px;color:#4a3d16;font-weight:normal;">Транзакция</div>
<div class="r" style="left:192px;top:380px;width:1269px;height:1px;background:#ededed"></div>
<div class="r" style="left:192px;top:399px;width:459px;height:1px;background:#ededed"></div>
<div class="r" style="left:547px;top:400px;width:1px;height:18px;background:#ededed"></div>
<div class="r" style="left:33px;top:418px;width:1428px;height:1px;background:#d5dade"></div>
<div class="r" style="left:192px;top:362px;width:1px;height:56px;background:#d5dade"></div>
<div class="r" style="left:651px;top:362px;width:1px;height:56px;background:#d5dade"></div>
<div class="r" style="left:913px;top:362px;width:1px;height:56px;background:#d5dade"></div>
<svg class="r" style="left:37px;top:364px" width="15" height="15" viewBox="0 0 15 15"><defs><radialGradient id="ii" cx="0.4" cy="0.3" r="0.75"><stop offset="0" stop-color="#e4f2fc"/><stop offset="0.55" stop-color="#72a8dc"/><stop offset="1" stop-color="#3a72b0"/></radialGradient></defs><circle cx="7.8" cy="7.5" r="7" fill="url(#ii)" stroke="#4a6080" stroke-width="0.9"/><rect x="6.8" y="6" width="2" height="6" fill="#fff"/><rect x="6.8" y="3" width="2" height="2" fill="#fff"/></svg>
<div class="t" style="left:57px;top:366px;font-size:11px;line-height:13px;color:#000;font-weight:normal;">07.11.2022 12:02:57</div>
<div class="t" style="left:197px;top:366px;font-size:11px;line-height:13px;color:#000;font-weight:normal;">admin</div>
<div class="t" style="left:197px;top:385px;font-size:11px;line-height:13px;color:#000;font-weight:normal;">RD</div>
<div class="t" style="left:197px;top:404px;font-size:11px;line-height:13px;color:#000;font-weight:normal;">Толстый клиент</div>
<div class="t" style="left:600px;top:404px;font-size:11px;line-height:13px;color:#000;font-weight:normal;width:47px;text-align:right">2</div>
<div class="t" style="left:656px;top:366px;font-size:11px;line-height:13px;color:#000;font-weight:normal;">Обмен данными.ОбменУправлениеТорговлейБ...</div>
<div class="t" style="left:918px;top:366px;font-size:11px;line-height:13px;color:#000;font-weight:normal;">Нет транзакции</div>
<div class="t" style="left:656px;top:385px;font-size:11px;line-height:13px;color:#000;font-weight:normal;">Начало процесса обмена данными для узла</div>
<div class="t" style="left:656px;top:398px;font-size:11px;line-height:13px;color:#000;font-weight:normal;">Управление торговлей, редакция 11.0</div>
<div class="r" style="left:192px;top:437px;width:1269px;height:1px;background:#ededed"></div>
<div class="r" style="left:192px;top:456px;width:459px;height:1px;background:#ededed"></div>
<div class="r" style="left:547px;top:457px;width:1px;height:18px;background:#ededed"></div>
<div class="r" style="left:33px;top:475px;width:1428px;height:1px;background:#d5dade"></div>
<div class="r" style="left:192px;top:419px;width:1px;height:56px;background:#d5dade"></div>
<div class="r" style="left:651px;top:419px;width:1px;height:56px;background:#d5dade"></div>
<div class="r" style="left:913px;top:419px;width:1px;height:56px;background:#d5dade"></div>
<svg class="r" style="left:37px;top:421px" width="15" height="15" viewBox="0 0 15 15"><defs><radialGradient id="ei" cx="0.4" cy="0.3" r="0.75"><stop offset="0" stop-color="#fde8e0"/><stop offset="0.55" stop-color="#f08c7a"/><stop offset="1" stop-color="#e06452"/></radialGradient></defs><circle cx="7.8" cy="7.5" r="7" fill="url(#ei)" stroke="#8a5048" stroke-width="0.9"/><path d="M5.2 4.9 L10.4 10.1 M10.4 4.9 L5.2 10.1" stroke="#fff" stroke-width="1.6"/></svg>
<div class="t" style="left:57px;top:423px;font-size:11px;line-height:13px;color:#000;font-weight:normal;">07.11.2022 12:03:08</div>
<div class="t" style="left:197px;top:423px;font-size:11px;line-height:13px;color:#000;font-weight:normal;">admin</div>
<div class="t" style="left:197px;top:442px;font-size:11px;line-height:13px;color:#000;font-weight:normal;">RD</div>
<div class="t" style="left:197px;top:461px;font-size:11px;line-height:13px;color:#000;font-weight:normal;">Толстый клиент</div>
<div class="t" style="left:600px;top:461px;font-size:11px;line-height:13px;color:#000;font-weight:normal;width:47px;text-align:right">2</div>
<div class="t" style="left:656px;top:423px;font-size:11px;line-height:13px;color:#000;font-weight:normal;">Обмен данными.ОбменУправлениеТорговлейБ...</div>
<div class="t" style="left:918px;top:423px;font-size:11px;line-height:13px;color:#000;font-weight:normal;">Нет транзакции</div>
<div class="t" style="left:656px;top:442px;font-size:11px;line-height:13px;color:#000;font-weight:normal;">Не найдено соответствие для значения</div>
<div class="t" style="left:656px;top:455px;font-size:11px;line-height:13px;color:#000;font-weight:normal;">Источника...</div>
<div class="r" style="left:192px;top:494px;width:1269px;height:1px;background:#ededed"></div>
<div class="r" style="left:192px;top:513px;width:459px;height:1px;background:#ededed"></div>
<div class="r" style="left:547px;top:514px;width:1px;height:18px;background:#ededed"></div>
<div class="r" style="left:33px;top:532px;width:1428px;height:1px;background:#d5dade"></div>
<div class="r" style="left:192px;top:476px;width:1px;height:56px;background:#d5dade"></div>
<div class="r" style="left:651px;top:476px;width:1px;height:56px;background:#d5dade"></div>
<div class="r" style="left:913px;top:476px;width:1px;height:56px;background:#d5dade"></div>
<svg class="r" style="left:37px;top:478px" width="15" height="15" viewBox="0 0 15 15"><defs><radialGradient id="ei" cx="0.4" cy="0.3" r="0.75"><stop offset="0" stop-color="#fde8e0"/><stop offset="0.55" stop-color="#f08c7a"/><stop offset="1" stop-color="#e06452"/></radialGradient></defs><circle cx="7.8" cy="7.5" r="7" fill="url(#ei)" stroke="#8a5048" stroke-width="0.9"/><path d="M5.2 4.9 L10.4 10.1 M10.4 4.9 L5.2 10.1" stroke="#fff" stroke-width="1.6"/></svg>
<div class="t" style="left:57px;top:480px;font-size:11px;line-height:13px;color:#000;font-weight:normal;">07.11.2022 12:03:08</div>
<div class="t" style="left:197px;top:480px;font-size:11px;line-height:13px;color:#000;font-weight:normal;">admin</div>
<div class="t" style="left:197px;top:499px;font-size:11px;line-height:13px;color:#000;font-weight:normal;">RD</div>
<div class="t" style="left:197px;top:518px;font-size:11px;line-height:13px;color:#000;font-weight:normal;">Толстый клиент</div>
<div class="t" style="left:600px;top:518px;font-size:11px;line-height:13px;color:#000;font-weight:normal;width:47px;text-align:right">2</div>
<div class="t" style="left:656px;top:480px;font-size:11px;line-height:13px;color:#000;font-weight:normal;">Обмен данными.ОбменУправлениеТорговлейБ...</div>
<div class="t" style="left:918px;top:480px;font-size:11px;line-height:13px;color:#000;font-weight:normal;">Нет транзакции</div>
<div class="t" style="left:656px;top:499px;font-size:11px;line-height:13px;color:#000;font-weight:normal;">Не найдено соответствие для значения</div>
<div class="t" style="left:656px;top:512px;font-size:11px;line-height:13px;color:#000;font-weight:normal;">Источника...</div>
<div class="r" style="left:192px;top:551px;width:1269px;height:1px;background:#ededed"></div>
<div class="r" style="left:192px;top:570px;width:459px;height:1px;background:#ededed"></div>
<div class="r" style="left:547px;top:571px;width:1px;height:18px;background:#ededed"></div>
<div class="r" style="left:33px;top:589px;width:1428px;height:1px;background:#d5dade"></div>
<div class="r" style="left:192px;top:533px;width:1px;height:56px;background:#d5dade"></div>
<div class="r" style="left:651px;top:533px;width:1px;height:56px;background:#d5dade"></div>
<div class="r" style="left:913px;top:533px;width:1px;height:56px;background:#d5dade"></div>
<svg class="r" style="left:37px;top:535px" width="15" height="15" viewBox="0 0 15 15"><defs><radialGradient id="ei" cx="0.4" cy="0.3" r="0.75"><stop offset="0" stop-color="#fde8e0"/><stop offset="0.55" stop-color="#f08c7a"/><stop offset="1" stop-color="#e06452"/></radialGradient></defs><circle cx="7.8" cy="7.5" r="7" fill="url(#ei)" stroke="#8a5048" stroke-width="0.9"/><path d="M5.2 4.9 L10.4 10.1 M10.4 4.9 L5.2 10.1" stroke="#fff" stroke-width="1.6"/></svg>
<div class="t" style="left:57px;top:537px;font-size:11px;line-height:13px;color:#000;font-weight:normal;">07.11.2022 12:03:08</div>
<div class="t" style="left:197px;top:537px;font-size:11px;line-height:13px;color:#000;font-weight:normal;">admin</div>
<div class="t" style="left:197px;top:556px;font-size:11px;line-height:13px;color:#000;font-weight:normal;">RD</div>
<div class="t" style="left:197px;top:575px;font-size:11px;line-height:13px;color:#000;font-weight:normal;">Толстый клиент</div>
<div class="t" style="left:600px;top:575px;font-size:11px;line-height:13px;color:#000;font-weight:normal;width:47px;text-align:right">2</div>
<div class="t" style="left:656px;top:537px;font-size:11px;line-height:13px;color:#000;font-weight:normal;">Обмен данными.ОбменУправлениеТорговлейБ...</div>
<div class="t" style="left:918px;top:537px;font-size:11px;line-height:13px;color:#000;font-weight:normal;">Нет транзакции</div>
<div class="t" style="left:656px;top:556px;font-size:11px;line-height:13px;color:#000;font-weight:normal;">Не найдено соответствие для значения</div>
<div class="t" style="left:656px;top:569px;font-size:11px;line-height:13px;color:#000;font-weight:normal;">Источника...</div>
<div class="r" style="left:33px;top:589px;width:1428px;height:57px;background:#c8e0fa"></div>
<div class="r" style="left:652px;top:609px;width:261px;height:37px;background:#6f9acf"></div>
<div class="r" style="left:192px;top:608px;width:1269px;height:1px;background:#b9cde2"></div>
<div class="r" style="left:192px;top:627px;width:459px;height:1px;background:#b9cde2"></div>
<div class="r" style="left:547px;top:628px;width:1px;height:18px;background:#b9cde2"></div>
<div class="r" style="left:33px;top:646px;width:1428px;height:1px;background:#b9cde2"></div>
<div class="r" style="left:192px;top:590px;width:1px;height:56px;background:#b9cde2"></div>
<div class="r" style="left:651px;top:590px;width:1px;height:56px;background:#b9cde2"></div>
<div class="r" style="left:913px;top:590px;width:1px;height:56px;background:#b9cde2"></div>
<svg class="r" style="left:37px;top:592px" width="15" height="15" viewBox="0 0 15 15"><defs><radialGradient id="ei" cx="0.4" cy="0.3" r="0.75"><stop offset="0" stop-color="#fde8e0"/><stop offset="0.55" stop-color="#f08c7a"/><stop offset="1" stop-color="#e06452"/></radialGradient></defs><circle cx="7.8" cy="7.5" r="7" fill="url(#ei)" stroke="#8a5048" stroke-width="0.9"/><path d="M5.2 4.9 L10.4 10.1 M10.4 4.9 L5.2 10.1" stroke="#fff" stroke-width="1.6"/></svg>
<div class="t" style="left:57px;top:594px;font-size:11px;line-height:13px;color:#000;font-weight:normal;">07.11.2022 12:03:08</div>
<div class="t" style="left:197px;top:594px;font-size:11px;line-height:13px;color:#000;font-weight:normal;">admin</div>
<div class="t" style="left:197px;top:613px;font-size:11px;line-height:13px;color:#000;font-weight:normal;">RD</div>
<div class="t" style="left:197px;top:632px;font-size:11px;line-height:13px;color:#000;font-weight:normal;">Толстый клиент</div>
<div class="t" style="left:600px;top:632px;font-size:11px;line-height:13px;color:#000;font-weight:normal;width:47px;text-align:right">2</div>
<div class="t" style="left:656px;top:594px;font-size:11px;line-height:13px;color:#000;font-weight:normal;">Обмен данными.ОбменУправлениеТорговлейБ...</div>
<div class="t" style="left:918px;top:594px;font-size:11px;line-height:13px;color:#000;font-weight:normal;">Нет транзакции</div>
<div class="t" style="left:656px;top:613px;font-size:11px;line-height:13px;color:#fff;font-weight:normal;">Не найдено соответствие для значения</div>
<div class="t" style="left:656px;top:626px;font-size:11px;line-height:13px;color:#fff;font-weight:normal;">Источника...</div>
<div class="r" style="left:192px;top:665px;width:1269px;height:1px;background:#ededed"></div>
<div class="r" style="left:192px;top:684px;width:459px;height:1px;background:#ededed"></div>
<div class="r" style="left:547px;top:685px;width:1px;height:18px;background:#ededed"></div>
<div class="r" style="left:33px;top:703px;width:1428px;height:1px;background:#d5dade"></div>
<div class="r" style="left:192px;top:647px;width:1px;height:56px;background:#d5dade"></div>
<div class="r" style="left:651px;top:647px;width:1px;height:56px;background:#d5dade"></div>
<div class="r" style="left:913px;top:647px;width:1px;height:56px;background:#d5dade"></div>
<svg class="r" style="left:37px;top:649px" width="15" height="15" viewBox="0 0 15 15"><defs><radialGradient id="ii" cx="0.4" cy="0.3" r="0.75"><stop offset="0" stop-color="#e4f2fc"/><stop offset="0.55" stop-color="#72a8dc"/><stop offset="1" stop-color="#3a72b0"/></radialGradient></defs><circle cx="7.8" cy="7.5" r="7" fill="url(#ii)" stroke="#4a6080" stroke-width="0.9"/><rect x="6.8" y="6" width="2" height="6" fill="#fff"/><rect x="6.8" y="3" width="2" height="2" fill="#fff"/></svg>
<div class="t" style="left:57px;top:651px;font-size:11px;line-height:13px;color:#000;font-weight:normal;">07.11.2022 12:03:10</div>
<div class="t" style="left:197px;top:651px;font-size:11px;line-height:13px;color:#000;font-weight:normal;">admin</div>
<div class="t" style="left:197px;top:670px;font-size:11px;line-height:13px;color:#000;font-weight:normal;">RD</div>
<div class="t" style="left:197px;top:689px;font-size:11px;line-height:13px;color:#000;font-weight:normal;">Толстый клиент</div>
<div class="t" style="left:600px;top:689px;font-size:11px;line-height:13px;color:#000;font-weight:normal;width:47px;text-align:right">2</div>
<div class="t" style="left:656px;top:651px;font-size:11px;line-height:13px;color:#000;font-weight:normal;">Обмен данными.ОбменУправлениеТорговлейБ...</div>
<div class="t" style="left:918px;top:651px;font-size:11px;line-height:13px;color:#000;font-weight:normal;">Нет транзакции</div>
<div class="t" style="left:656px;top:670px;font-size:11px;line-height:13px;color:#000;font-weight:normal;">Ошибка, Выгрузка данных; Объектов</div>
<div class="t" style="left:656px;top:683px;font-size:11px;line-height:13px;color:#000;font-weight:normal;">обработано: 5 004</div>
<div class="r" style="left:1086px;top:131px;width:735px;height:693px;background:#fffaee"></div>
<div class="r" style="left:1086px;top:131px;width:3px;height:693px;background:#c6c6c6"></div>
<div class="r" style="left:1086px;top:820px;width:735px;height:3px;background:#c6c6c6"></div>
<div class="r" style="left:1085px;top:823px;width:736px;height:1px;background:#8e8e8e"></div>
<div class="r" style="left:1089px;top:131px;width:732px;height:21px;background:#cbcbcb"></div>
<div class="t" style="left:1094px;top:137px;font-size:11px;line-height:13px;color:#2a2a2a;font-weight:bold;">Событие</div>
<svg class="r" style="left:1810px;top:137px" width="11" height="11" viewBox="0 0 11 11"><path d="M1 1 L10 10 M10 1 L1 10" stroke="#2a2a2a" stroke-width="1.8"/></svg>
<div class="t" style="left:1101px;top:168px;font-size:11px;line-height:13px;color:#2e2810;font-weight:normal;">Пользователь:</div>
<div class="r" style="left:1181px;top:164px;width:273px;height:19px;border:1px solid #c5ba96;border-radius:3px;box-sizing:border-box;background:#fffcf2;"></div>
<div class="r" style="left:1184px;top:167px;width:29px;height:13px;background:#3a64c8"></div>
<div class="t" style="left:1184px;top:167px;font-size:11px;line-height:13px;color:#fff;font-weight:normal;">admin</div>
<div class="t" style="left:1101px;top:192px;font-size:11px;line-height:13px;color:#2e2810;font-weight:normal;">Дата, время:</div>
<div class="r" style="left:1181px;top:189px;width:144px;height:19px;border:1px solid #c5ba96;border-radius:3px;box-sizing:border-box;background:#fffcf2;"></div>
<div class="t" style="left:1184.5px;top:193px;font-size:11px;line-height:13px;color:#000;font-weight:normal;">07.11.2022 12:03:08</div>
<div class="t" style="left:1462px;top:168px;font-size:11px;line-height:13px;color:#2e2810;font-weight:normal;">Приложение:</div>
<div class="r" style="left:1534px;top:164px;width:274px;height:19px;border:1px solid #c5ba96;border-radius:3px;box-sizing:border-box;background:#fffcf2;"></div>
<div class="t" style="left:1537.5px;top:168px;font-size:11px;line-height:13px;color:#000;font-weight:normal;">Толстый клиент</div>
<div class="t" style="left:1462px;top:192px;font-size:11px;line-height:13px;color:#2e2810;font-weight:normal;">Компьютер:</div>
<div class="r" style="left:1534px;top:189px;width:274px;height:19px;border:1px solid #c5ba96;border-radius:3px;box-sizing:border-box;background:#fffcf2;"></div>
<div class="t" style="left:1537.5px;top:193px;font-size:11px;line-height:13px;color:#000;font-weight:normal;">RD</div>
<div class="t" style="left:1101px;top:227px;font-size:12px;line-height:14px;color:#2e2810;font-weight:bold;">Данные</div>
<div class="t" style="left:1101px;top:251px;font-size:11px;line-height:13px;color:#2e2810;font-weight:normal;">Метаданные:</div>
<div class="r" style="left:1189px;top:247px;width:619px;height:19px;border:1px solid #c5ba96;border-radius:3px;box-sizing:border-box;background:#fffcf2;"></div>
<div class="r" style="left:1777px;top:248px;width:1px;height:17px;background:#e4dcc0"></div>
<div class="t" style="left:1779px;top:251px;font-size:11px;line-height:13px;color:#8a8a7a;font-weight:normal;font-size:9px;top:252px">...</div>
<div class="r" style="left:1792px;top:248px;width:15px;height:17px;background:linear-gradient(#fcf8e8,#efe8cc);border-left:1px solid #d8d0b0;box-sizing:border-box"></div>
<svg class="r" style="left:1794px;top:250px" width="12" height="13" viewBox="0 0 12 13"><circle cx="5" cy="5" r="3.6" fill="none" stroke="#2a2a2a" stroke-width="1.4"/><path d="M7.5 7.5 L11 11" stroke="#2a2a2a" stroke-width="1.8"/></svg>
<div class="t" style="left:1101px;top:276px;font-size:11px;line-height:13px;color:#2e2810;font-weight:normal;">Данные:</div>
<div class="r" style="left:1189px;top:272px;width:619px;height:19px;border:1px solid #c5ba96;border-radius:3px;box-sizing:border-box;background:#fffcf2;"></div>
<div class="t" style="left:1101px;top:301px;font-size:11px;line-height:13px;color:#2e2810;font-weight:normal;">Представление:</div>
<div class="r" style="left:1189px;top:297px;width:619px;height:113px;border:1px solid #c5ba96;border-radius:3px;box-sizing:border-box;background:#fffcf2;"></div>
<div class="t" style="left:1101px;top:447px;font-size:12px;line-height:14px;color:#2e2810;font-weight:bold;">Событие</div>
<div class="r" style="left:1101px;top:468px;width:707px;height:18px;border:1px solid #c5ba96;border-radius:3px;box-sizing:border-box;background:#fffcf2;"></div>
<div class="t" style="left:1104.5px;top:472px;font-size:11px;line-height:13px;color:#000;font-weight:normal;">Обмен данными.ОбменУправлениеТорговлейБухгалтерияПредприятия.Узел ЦБ.Выгрузка данных</div>
<div class="t" style="left:1101px;top:494px;font-size:11px;line-height:13px;color:#2e2810;font-weight:normal;">Комментарий:</div>
<div class="r" style="left:1101px;top:510px;width:707px;height:132px;border:1px solid #c5ba96;border-radius:3px;box-sizing:border-box;background:#fffcf2;"></div>
<div class="t" style="left:1104px;top:514px;font-size:11px;line-height:13px;color:#000;font-weight:normal;">Не найдено соответствие для значения Источника</div>
<div class="t" style="left:1124px;top:527px;font-size:11px;line-height:13px;color:#000;font-weight:normal;">ИмяПКО</div>
<div class="t" style="left:1221px;top:527px;font-size:11px;line-height:13px;color:#000;font-weight:normal;">=</div>
<div class="t" style="left:1233px;top:527px;font-size:11px;line-height:13px;color:#000;font-weight:normal;">СтавкиНДС</div>
<div class="t" style="left:1124px;top:540px;font-size:11px;line-height:13px;color:#000;font-weight:normal;">Значение</div>
<div class="t" style="left:1217px;top:540px;font-size:11px;line-height:13px;color:#000;font-weight:normal;">=</div>
<div class="t" style="left:1230px;top:540px;font-size:11px;line-height:13px;color:#000;font-weight:normal;">20%</div>
<div class="t" style="left:1124px;top:553px;font-size:11px;line-height:13px;color:#000;font-weight:normal;">ТипЗначения</div>
<div class="t" style="left:1228px;top:553px;font-size:11px;line-height:13px;color:#000;font-weight:normal;">=</div>
<div class="t" style="left:1239px;top:553px;font-size:11px;line-height:13px;color:#000;font-weight:normal;">ПеречислениеСсылка.СтавкиНДС</div>
<div class="t" style="left:1124px;top:566px;font-size:11px;line-height:13px;color:#000;font-weight:normal;">Текст</div>
<div class="t" style="left:1208px;top:566px;font-size:11px;line-height:13px;color:#000;font-weight:normal;">=</div>
<div class="t" style="left:1220px;top:566px;font-size:11px;line-height:13px;color:#000;font-weight:normal;">В правиле конвертации значений (ПКЗ) необходимо сопоставить значение Источника значению Приемника.</div>
<div class="t" style="left:1104px;top:579px;font-size:11px;line-height:13px;color:#000;font-weight:normal;">Если подходящего значения приемника нет, то указать пустое значение.</div>
<div class="t" style="left:1124px;top:592px;font-size:11px;line-height:13px;color:#000;font-weight:normal;">КСообщенияОбОшибках</div>
<div class="t" style="left:1260px;top:592px;font-size:11px;line-height:13px;color:#000;font-weight:normal;">=</div>
<div class="t" style="left:1273px;top:592px;font-size:11px;line-height:13px;color:#000;font-weight:normal;">71</div>
<div class="t" style="left:1101px;top:674px;font-size:12px;line-height:14px;color:#2e2810;font-weight:bold;">Сеанс</div>
<div class="t" style="left:1462px;top:674px;font-size:12px;line-height:14px;color:#2e2810;font-weight:bold;">Транзакция</div>
<div class="t" style="left:1101px;top:698px;font-size:11px;line-height:13px;color:#2e2810;font-weight:normal;">Номер:</div>
<div class="r" style="left:1197px;top:694px;width:257px;height:19px;border:1px solid #c5ba96;border-radius:3px;box-sizing:border-box;background:#fffcf2;"></div>
<div class="t" style="left:1200.5px;top:698px;font-size:11px;line-height:13px;color:#000;font-weight:normal;">2</div>
<div class="t" style="left:1101px;top:723px;font-size:11px;line-height:13px;color:#2e2810;font-weight:normal;">Рабочий сервер:</div>
<div class="r" style="left:1197px;top:719px;width:257px;height:19px;border:1px solid #c5ba96;border-radius:3px;box-sizing:border-box;background:#fffcf2;"></div>
<div class="t" style="left:1101px;top:748px;font-size:11px;line-height:13px;color:#2e2810;font-weight:normal;">Основной IP порт:</div>
<div class="r" style="left:1197px;top:744px;width:120px;height:19px;border:1px solid #c5ba96;border-radius:3px;box-sizing:border-box;background:#fffcf2;"></div>
<div class="t" style="left:1200.5px;top:748px;font-size:11px;line-height:13px;color:#000;font-weight:normal;">0</div>
<div class="t" style="left:1101px;top:773px;font-size:11px;line-height:13px;color:#2e2810;font-weight:normal;">Вспомог. IP порт:</div>
<div class="r" style="left:1197px;top:769px;width:120px;height:19px;border:1px solid #c5ba96;border-radius:3px;box-sizing:border-box;background:#fffcf2;"></div>
<div class="t" style="left:1200.5px;top:773px;font-size:11px;line-height:13px;color:#000;font-weight:normal;">0</div>
<div class="t" style="left:1462px;top:698px;font-size:11px;line-height:13px;color:#2e2810;font-weight:normal;">Идентификатор:</div>
<div class="r" style="left:1630px;top:694px;width:178px;height:19px;border:1px solid #c5ba96;border-radius:3px;box-sizing:border-box;background:#fffcf2;"></div>
<div class="t" style="left:1462px;top:723px;font-size:11px;line-height:13px;color:#2e2810;font-weight:normal;">Статус завершения транзакции:</div>
<div class="r" style="left:1630px;top:719px;width:178px;height:19px;border:1px solid #c5ba96;border-radius:3px;box-sizing:border-box;background:#fffcf2;"></div>
<div class="t" style="left:1633.5px;top:723px;font-size:11px;line-height:13px;color:#000;font-weight:normal;">Нет транзакции</div>
<div class="r" style="left:1699px;top:796px;width:81px;height:22px;border:1px solid #c8a860;border-radius:3px;box-sizing:border-box;background:linear-gradient(#fdf0c8,#f3d890)"></div>
<svg class="r" style="left:1707px;top:801px" width="11" height="11" viewBox="0 0 11 11"><path d="M1.5 1.5 L9.5 9.5 M9.5 1.5 L1.5 9.5" stroke="#3a6a9a" stroke-width="2.8"/><path d="M1.5 1.5 L9.5 9.5 M9.5 1.5 L1.5 9.5" stroke="#5aa0d8" stroke-width="1.4"/></svg>
<div class="t" style="left:1724px;top:800px;font-size:12px;line-height:14px;color:#2e2810;font-weight:bold;">Закрыть</div>
<svg class="r" style="left:1788px;top:798px" width="18" height="18" viewBox="0 0 18 18"><defs><radialGradient id="hq" cx="0.4" cy="0.3" r="0.75"><stop offset="0" stop-color="#fff4d8"/><stop offset="0.6" stop-color="#f4c070"/><stop offset="1" stop-color="#d89840"/></radialGradient></defs><circle cx="9" cy="9" r="8" fill="url(#hq)" stroke="#b08850" stroke-width="0.8"/><text x="9" y="13" font-family="Liberation Sans" font-size="11" text-anchor="middle" fill="#5a4020">?</text></svg>
</body></html>
